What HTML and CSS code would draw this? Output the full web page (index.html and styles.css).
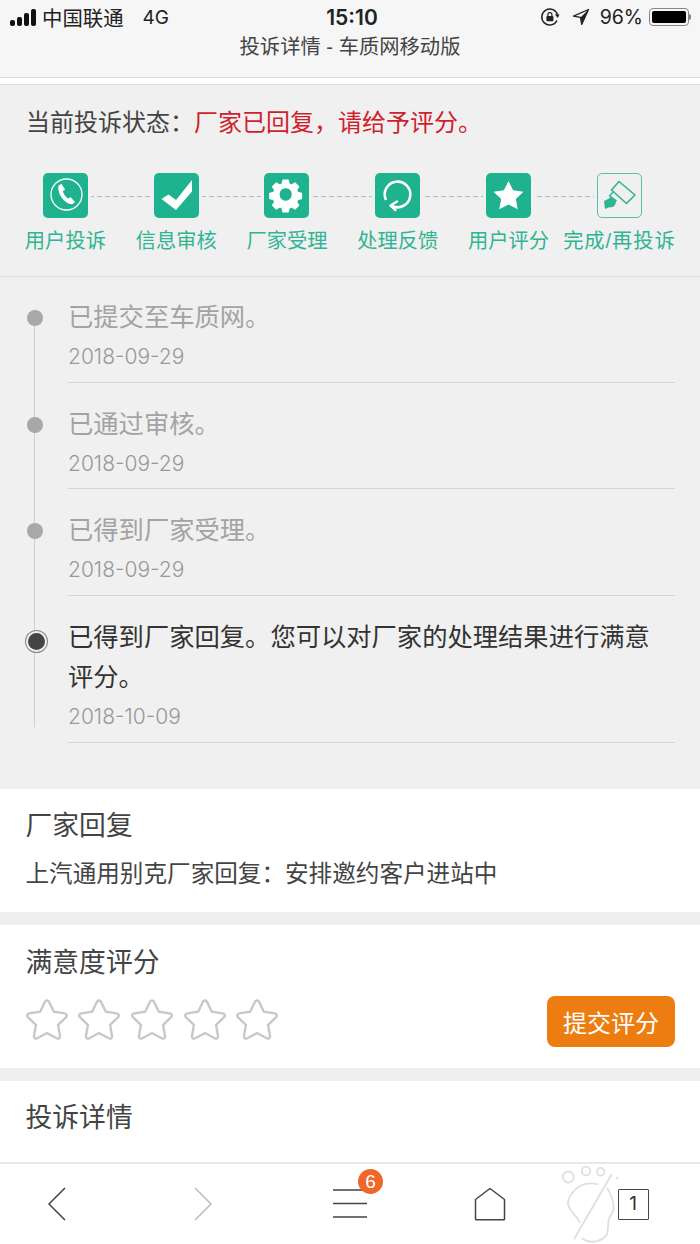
FILE: index.html
```html
<!DOCTYPE html>
<html lang="zh-CN">
<head>
<meta charset="utf-8">
<title>投诉详情 - 车质网移动版</title>
<link rel="stylesheet" href="styles.css">
</head>
<body>
<div class="page">
  <header class="browser-head">
    <div class="status-bar">
      <div class="sb-left">
        <span class="signal"><i class="s1"></i><i class="s2"></i><i class="s3"></i><i class="s4"></i></span>
        <span class="carrier">中国联通</span>
        <span class="net">4G</span>
      </div>
      <div class="sb-time">15:10</div>
      <div class="sb-right">
        <svg class="ic-lock" width="20" height="20" viewBox="0 0 20 20"><path d="M17.600 8.200A8 8 0 1 0 17 13.500" fill="none" stroke="#222" stroke-width="1.500"/><path d="M14.800 7.400l4.600.2-1.500 3.400z" fill="#222"/><rect x="6.400" y="9" width="7" height="5.200" rx=".8" fill="#222"/><path d="M7.900 9V7.600a2 2 0 0 1 4 0V9" fill="none" stroke="#222" stroke-width="1.200"/></svg>
        <svg class="ic-loc" width="18" height="18" viewBox="0 0 18 18"><path d="M16.500 1.500L1.500 8.200l7 1.200 1.200 7z" fill="none" stroke="#222" stroke-width="1.300" stroke-linejoin="round"/><path d="M16.500 1.500L8.500 9.400l1.200 7z" fill="#222"/></svg>
        <span class="pct">96%</span>
        <span class="battery"><i></i></span><span class="nub"></span>
      </div>
    </div>
    <div class="page-title">投诉详情 - 车质网移动版</div>
  </header>

  <main class="content">
    <section class="progress">
      <p class="state">当前投诉状态&#xFF1A;<span class="state-red">厂家已回复&#xFF0C;请给予评分。</span></p>
      <div class="steps">
        <div class="step">
          <span class="step-ic"><svg width="45" height="45" viewBox="0 0 45 45"><circle cx="23.500" cy="21.500" r="15.500" fill="none" stroke="#fff" stroke-width="1.300"/><path d="M15.500 12.500l3-1.800 3.600 5.800-2.200 1.800c.7 2.900 2.700 5.800 5.300 7.200l2.300-1.500 4.500 5-2.300 2.100C23 32 13.800 21.600 15.500 12.500z" fill="#fff"/></svg></span>
          <span class="step-name">用户投诉</span>
        </div>
        <div class="step">
          <span class="step-ic"><svg width="45" height="45" viewBox="0 0 45 45"><path d="M7.500 26l7-4.500 7.500 5.500L38 7v11.500L22 37z" fill="#fff"/></svg></span>
          <span class="step-name">信息审核</span>
        </div>
        <div class="step">
          <span class="step-ic"><svg width="45" height="45" viewBox="0 0 45 45"><path transform="translate(1.400 1.200) scale(.9)" fill="#fff" stroke="#fff" stroke-width="1.200" stroke-linejoin="round" fill-rule="evenodd" d="M19.500 6.500h6l1 4.300 2.600 1.100 3.800-2.300 4.200 4.200-2.300 3.800 1.100 2.600 4.300 1v6l-4.300 1-1.100 2.600 2.300 3.800-4.200 4.200-3.800-2.300-2.600 1.100-1 4.300h-6l-1-4.300-2.600-1.100-3.800 2.300-4.200-4.200 2.300-3.800-1.100-2.600-4.300-1v-6l4.300-1 1.100-2.600-2.300-3.800 4.200-4.200 3.800 2.300 2.600-1.100zM22.500 15a7.500 7.500 0 1 0 .01 0z"/></svg></span>
          <span class="step-name">厂家受理</span>
        </div>
        <div class="step">
          <span class="step-ic"><svg width="45" height="45" viewBox="0 0 45 45"><path d="M11 27A12.800 12.800 0 1 1 17 33" fill="none" stroke="#fff" stroke-width="2.600"/><path d="M22 28.500l-6.500 4 5 4.500" fill="none" stroke="#fff" stroke-width="2.400" stroke-linejoin="round" stroke-linecap="round"/></svg></span>
          <span class="step-name">处理反馈</span>
        </div>
        <div class="step">
          <span class="step-ic"><svg width="45" height="45" viewBox="0 0 45 45"><path d="M22.500 8l4.600 9.300 10.300 1.500-7.500 7.200 1.800 10.200-9.200-4.800-9.200 4.800 1.800-10.200-7.500-7.200 10.300-1.500z" fill="#fff"/></svg></span>
          <span class="step-name">用户评分</span>
        </div>
        <div class="step">
          <span class="step-ic step-ic-done"><svg width="43" height="43" viewBox="0 0 43 43"><path d="M21 7.500l16 13.500-8.500 8.500L13.500 16z" fill="none" stroke="#2fb593" stroke-width="1.600" stroke-linejoin="round"/><path d="M15 18l-3.500 4 7 5" fill="none" stroke="#2fb593" stroke-width="1.400"/><path d="M6 27l4-2 3.500-2.500 5 4-1.500 4.500-2 2-4.500.5-3.500 1.500z" fill="#2fb593"/></svg></span>
          <span class="step-name step-name-long">完成/再投诉</span>
        </div>
      </div>
      <ol class="timeline">
        <li class="tl-item">
          <div class="tl-text">已提交至车质网。</div>
          <div class="tl-date">2018-09-29</div>
        </li>
        <li class="tl-item">
          <div class="tl-text">已通过审核。</div>
          <div class="tl-date">2018-09-29</div>
        </li>
        <li class="tl-item">
          <div class="tl-text">已得到厂家受理。</div>
          <div class="tl-date">2018-09-29</div>
        </li>
        <li class="tl-item tl-current">
          <div class="tl-text">已得到厂家回复。您可以对厂家的处理结果进行满意评分。</div>
          <div class="tl-date">2018-10-09</div>
        </li>
      </ol>
    </section>

    <section class="card card-reply">
      <h2 class="card-title">厂家回复</h2>
      <p class="reply">上汽通用别克厂家回复&#xFF1A;安排邀约客户进站中</p>
    </section>

    <section class="card card-rate">
      <h2 class="card-title">满意度评分</h2>
      <div class="rate-row">
        <div class="stars">
          <svg class="star" width="46" height="44" viewBox="0 0 46 44"><path d="M23 2.500c1 0 1.700.6 2.200 1.600l4.600 9.600 10.800 1.700c2.300.4 2.900 2.400 1.300 4l-7.800 7.500 1.900 11c.3 2.200-1.400 3.400-3.300 2.300L23 35l-9.700 5.200c-1.900 1.100-3.600-.1-3.300-2.300l1.900-11-7.800-7.500c-1.600-1.600-1-3.600 1.300-4l10.800-1.700 4.600-9.600c.5-1 1.200-1.600 2.200-1.600z"/></svg>
          <svg class="star" width="46" height="44" viewBox="0 0 46 44"><path d="M23 2.500c1 0 1.700.6 2.200 1.600l4.600 9.600 10.800 1.700c2.300.4 2.900 2.400 1.300 4l-7.800 7.500 1.900 11c.3 2.200-1.400 3.400-3.300 2.300L23 35l-9.700 5.200c-1.900 1.100-3.600-.1-3.300-2.300l1.900-11-7.800-7.500c-1.600-1.600-1-3.600 1.300-4l10.800-1.700 4.600-9.600c.5-1 1.200-1.600 2.200-1.600z"/></svg>
          <svg class="star" width="46" height="44" viewBox="0 0 46 44"><path d="M23 2.500c1 0 1.700.6 2.200 1.600l4.600 9.600 10.800 1.700c2.300.4 2.900 2.400 1.300 4l-7.800 7.500 1.900 11c.3 2.200-1.400 3.400-3.300 2.300L23 35l-9.700 5.200c-1.900 1.100-3.600-.1-3.300-2.300l1.900-11-7.800-7.500c-1.600-1.600-1-3.600 1.300-4l10.800-1.700 4.600-9.600c.5-1 1.200-1.600 2.200-1.600z"/></svg>
          <svg class="star" width="46" height="44" viewBox="0 0 46 44"><path d="M23 2.500c1 0 1.700.6 2.200 1.600l4.600 9.600 10.800 1.700c2.300.4 2.900 2.400 1.300 4l-7.800 7.500 1.900 11c.3 2.200-1.400 3.400-3.300 2.300L23 35l-9.700 5.200c-1.900 1.100-3.600-.1-3.300-2.300l1.900-11-7.800-7.500c-1.600-1.600-1-3.600 1.300-4l10.800-1.700 4.600-9.600c.5-1 1.200-1.600 2.200-1.600z"/></svg>
          <svg class="star" width="46" height="44" viewBox="0 0 46 44"><path d="M23 2.500c1 0 1.700.6 2.200 1.600l4.600 9.600 10.800 1.700c2.300.4 2.900 2.400 1.300 4l-7.800 7.500 1.900 11c.3 2.200-1.400 3.400-3.300 2.300L23 35l-9.700 5.200c-1.900 1.100-3.600-.1-3.300-2.300l1.900-11-7.800-7.500c-1.600-1.600-1-3.600 1.300-4l10.800-1.700 4.600-9.600c.5-1 1.200-1.600 2.200-1.600z"/></svg>
        </div>
        <button class="submit" type="button">提交评分</button>
      </div>
    </section>

    <section class="card card-detail">
      <h2 class="card-title">投诉详情</h2>
    </section>
  </main>

  <nav class="toolbar">
    <svg width="20" height="34" viewBox="0 0 20 34"><path d="M18 1L2 17l16 16" fill="none" stroke="#444" stroke-width="1.500"/></svg>
    <svg width="20" height="34" viewBox="0 0 20 34"><path d="M2 1l16 16L2 33" fill="none" stroke="#bbb" stroke-width="1.500"/></svg>
    <span class="menu-btn">
      <svg width="34" height="30" viewBox="0 0 34 30"><path d="M0 2h34M0 15.500h34M0 29h34" stroke="#444" stroke-width="1.400"/></svg>
      <span class="badge">6</span>
    </span>
    <svg width="32" height="34" viewBox="0 0 32 34"><path d="M16 1.500L30.500 12.500v19.500a.8.800 0 0 1-.8.8H2.300a.8.800 0 0 1-.8-.8V12.500z" fill="none" stroke="#444" stroke-width="1.500" stroke-linejoin="round"/></svg>
    <span class="tabs">1</span>
    <svg class="foot" width="62" height="78" viewBox="0 0 62 78"><g fill="none" stroke="#dfdfdf" stroke-width="1.800"><circle cx="8.300" cy="12" r="5.500"/><circle cx="26" cy="6" r="4.300"/><circle cx="40.700" cy="6.700" r="3.800"/><path d="M51.700 9.300L14 74.300M56.700 14.300l.8-2.500"/><path d="M38 19.300C28 17 20 19 14 26S6 38 10 44s8 9 10 14"/><path d="M21.700 73c4 3 8 4 12 3.700s11-3 13-7 1-11 2-15 5-7 5-12-3-14-6.600-20"/></g></svg>
  </nav>
</div>
</body>
</html>
```

FILE: styles.css
```css
* { box-sizing: border-box; }
html, body { margin: 0; padding: 0; }
body {
  width: 700px;
  height: 1244px;
  overflow: hidden;
  background: #fff;
  color: #333;
  font-family: "Liberation Sans", "Noto Sans CJK SC", sans-serif;
}
.page { display: flex; flex-direction: column; height: 1244px; }

.browser-head {
  height: 78px;
  flex: none;
  background: #f6f6f6;
  border-bottom: 1px solid #dcdcdc;
}
.status-bar {
  height: 34px;
  display: grid;
  grid-template-columns: 1fr auto 1fr;
  align-items: center;
  color: #111;
  font-size: 20px;
}
.sb-left { display: flex; align-items: center; padding-left: 10px; }
.signal { display: flex; align-items: flex-end; gap: 2px; height: 18px; margin-right: 6px; }
.signal i { display: block; width: 5px; background: #111; border-radius: 2px; }
.s1 { height: 6px; }
.s2 { height: 9px; }
.s3 { height: 13px; }
.s4 { height: 17px; }
.carrier { font-size: 20.400px; color: #222; }
.net { margin-left: 19px; font-family: Inter, sans-serif; font-size: 19px; color: #222; }
.sb-time { padding-left: 4px; font-family: Inter, sans-serif; font-size: 21px; font-weight: 600; color: #222; }
.sb-right { display: flex; align-items: center; justify-content: flex-end; padding-right: 9px; }
.ic-lock { margin-right: 12px; }
.ic-loc { margin-right: 10px; }
.pct { font-family: Inter, sans-serif; font-size: 19.500px; color: #222; margin-right: 6px; }
.battery {
  width: 40px;
  height: 18px;
  border: 1px solid #888;
  border-radius: 4px;
  padding: 2px;
  display: flex;
}
.battery i { display: block; flex: 1; background: #000; border-radius: 2px; }
.nub { width: 2px; height: 6px; background: #888; border-radius: 0 2px 2px 0; }
.page-title {
  margin-top: 2px;
  height: 22px;
  line-height: 22px;
  text-align: center;
  font-size: 20.300px;
  color: #444;
}

.content {
  flex: 1;
  min-height: 0;
  overflow: hidden;
  padding-top: 6px;
  background: linear-gradient(#fff 6px, #eee 6px);
}

.progress { background: #f0f0f0; border-top: 1px solid #dcdcdc; height: 705px; }
.state { margin: 0; padding: 22px 0 0 26px; height: 72px; font-size: 24px; line-height: 32px; color: #444; }
.state-red { color: #cf1f2e; }

.steps {
  position: relative;
  display: grid;
  grid-template-columns: repeat(6, 110.800px);
  padding-left: 10px;
  padding-top: 16px;
  height: 120px;
  border-bottom: 1px solid #dcdcdc;
}
.steps::before {
  content: "";
  position: absolute;
  left: 65px;
  width: 554px;
  top: 39px;
  height: 1px;
  background: repeating-linear-gradient(90deg, #9ec5b7 0 5px, transparent 5px 8px);
}
.step { position: relative; display: flex; flex-direction: column; align-items: center; white-space: nowrap; }
.step-ic {
  width: 45px;
  height: 45px;
  border-radius: 5px;
  background: #1fb28f;
  box-shadow: 0 0 0 3px #f0f0f0;
  display: block;
}
.step-ic svg { display: block; }
.step-ic-done { background: #f0f0f0; border: 1px solid #58bfa6; }
.step-name { margin-top: 11px; font-size: 20.300px; line-height: 24px; color: #2fb593; }
.step-name-long { letter-spacing: .9px; }

.timeline { position: relative; list-style: none; margin: 0; padding: 20px 25px 0 68px; }
.timeline::before {
  content: "";
  position: absolute;
  left: 34px;
  top: 42px;
  width: 1px;
  height: 408px;
  background: #cfcfcf;
}
.tl-item { position: relative; border-bottom: 1px solid #d6d6d6; margin-bottom: 21px; height: 85.500px; }
.tl-item::before {
  content: "";
  position: absolute;
  left: -41.500px;
  top: 13px;
  width: 16px;
  height: 16px;
  border-radius: 50%;
  background: #a8a8a8;
}
.tl-text { font-size: 25.300px; line-height: 40px; color: #a3a3a3; }
.tl-date { font-family: Inter, sans-serif; font-weight: 300; font-size: 21px; line-height: 26px; margin-top: 7px; color: #999; }
.tl-current { height: 126px; }
.tl-current .tl-text { color: #333; }
.tl-current::before {
  left: -42px;
  top: 14px;
  width: 17px;
  height: 17px;
  background: #444;
  border: 2px solid #f0f0f0;
  box-shadow: 0 0 0 1px #888;
}

.card { background: #fff; padding: 0 25px 0 25.500px; margin-bottom: 13px; }
.card-title { margin: 0; font-size: 26.800px; font-weight: 400; line-height: 36px; color: #444; }
.card-reply { height: 123px; padding-top: 19px; }
.reply { margin: 14px 0 0; font-size: 23.600px; line-height: 32px; color: #444; }
.card-rate { height: 143px; padding-top: 20px; }
.rate-row { display: flex; justify-content: space-between; align-items: center; margin-top: 15px; }
.stars { display: flex; gap: 6.700px; margin-left: -2px; margin-bottom: 4px; }
.star { fill: #fff; stroke: #c8c8c8; stroke-width: 2.400; display: block; }
.submit {
  width: 128px;
  height: 51px;
  border: 0;
  border-radius: 8px;
  background: #ee7d11;
  color: #fff;
  font-size: 24px;
  font-family: inherit;
  padding: 0;
}
.card-detail { margin: 0; height: 81px; padding-top: 19px; }

.toolbar {
  position: relative;
  flex: none;
  height: 82px;
  background: #fff;
  border-top: 2px solid #e8e8e8;
  display: grid;
  grid-template-columns: 114px 178px 116px 164px 122px;
  justify-items: center;
  align-items: center;
}
.toolbar svg { display: block; }
.menu-btn { position: relative; display: block; height: 30px; margin-top: -3px; }
.badge {
  position: absolute;
  left: 25px;
  top: -19px;
  width: 25px;
  height: 25px;
  border-radius: 50%;
  background: #f0672a;
  color: #fff;
  font-size: 19px;
  line-height: 25px;
  text-align: center;
}
.tabs {
  width: 31px;
  height: 31px;
  border: 1.500px solid #444;
  border-radius: 1px;
  font-family: Inter, sans-serif;
  font-size: 19px;
  line-height: 28px;
  text-align: center;
  color: #333;
}
.foot { position: absolute; left: 560px; top: 1px; }
```
